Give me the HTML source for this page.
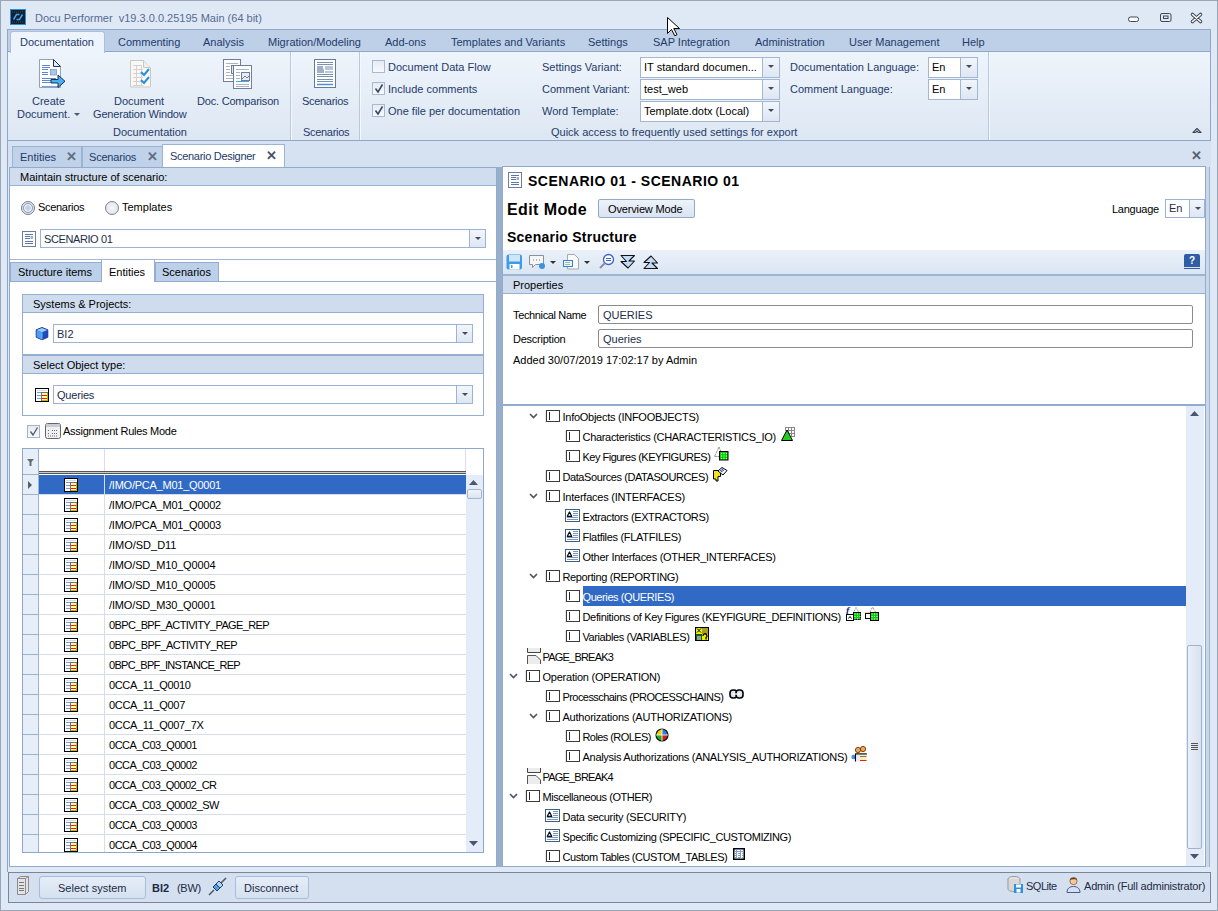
<!DOCTYPE html>
<html><head><meta charset="utf-8">
<style>
*{box-sizing:border-box;margin:0;padding:0}
html,body{width:1218px;height:911px;overflow:hidden;background:#dfe9f5;font-family:"Liberation Sans",sans-serif;font-size:11px;color:#000}
.a{position:absolute}
.t{position:absolute;line-height:14px;white-space:nowrap}
.rb{color:#1f3b6a}
.cb{position:absolute;width:13px;height:13px;border:1px solid #a9b9d0;background:linear-gradient(#e6ebf2,#f7f9fc)}
.combo{position:absolute;background:#fff;border:1px solid #a3b7d3}
.dd{position:absolute;top:0;right:0;bottom:0;width:17px;border-left:1px solid #a3b7d3;background:linear-gradient(#f2f6fb,#dde6f2)}
.dd:after{content:"";position:absolute;left:5px;top:7px;border-left:3px solid transparent;border-right:3px solid transparent;border-top:3px solid #444c5c}
</style></head><body>
<!-- window frame -->
<div class="a" style="left:0;top:0;width:1218px;height:911px;border:1px solid #9aa5b5;background:#dfe9f5"></div>

<!-- title bar -->
<svg class="a" style="left:10px;top:9px" width="16" height="16" viewBox="0 0 16 16"><rect x="0.5" y="0.5" width="15" height="15" fill="#15202c" stroke="#1f8fe8"/><path d="M2 3h12M2 13h12" stroke="#3a4a5a" stroke-dasharray="1 1"/><path d="M3.5 10.5l3-5h3M12.5 5.5l-3 5h-3" fill="none" stroke="#3aa8ff" stroke-width="1.5"/></svg>
<div class="t" style="left:35px;top:11px;color:#566b93">Docu Performer&nbsp; v19.3.0.0.25195 Main (64 bit)</div>

<!-- ribbon -->
<div class="a" style="left:7px;top:29px;width:1204px;height:112px;border:1px solid #8fa8c8;background:#bdd0e8"></div>
<div class="a" style="left:8px;top:51px;width:1202px;height:89px;border-top:1px solid #8fa8c8;background:linear-gradient(#eef4fb,#dde7f3)"></div>
<div class="a" style="left:10px;top:31px;width:95px;height:22px;border:1px solid #aac0dc;border-bottom:none;border-radius:3px 3px 0 0;background:#eef4fb"></div>
<div class="t rb" style="left:20px;top:35px">Documentation</div>
<div class="t rb" style="left:118px;top:35px">Commenting</div>
<div class="t rb" style="left:203px;top:35px">Analysis</div>
<div class="t rb" style="left:268px;top:35px">Migration/Modeling</div>
<div class="t rb" style="left:385px;top:35px">Add-ons</div>
<div class="t rb" style="left:451px;top:35px">Templates and Variants</div>
<div class="t rb" style="left:588px;top:35px">Settings</div>
<div class="t rb" style="left:653px;top:35px">SAP Integration</div>
<div class="t rb" style="left:755px;top:35px">Administration</div>
<div class="t rb" style="left:849px;top:35px">User Management</div>
<div class="t rb" style="left:962px;top:35px">Help</div>


<!-- ribbon body content -->
<div class="a" style="left:290px;top:52px;width:1px;height:88px;background:#b9c9dd;box-shadow:1px 0 0 #f5f9fd"></div>
<div class="a" style="left:359px;top:52px;width:1px;height:88px;background:#b9c9dd;box-shadow:1px 0 0 #f5f9fd"></div>
<div class="a" style="left:988px;top:52px;width:1px;height:88px;background:#b9c9dd;box-shadow:1px 0 0 #f5f9fd"></div>
<!-- create document icon -->
<svg class="a" style="left:37px;top:57px" width="32" height="34" viewBox="0 0 32 34">
<path d="M2.5 2.5h14l7 7v21h-21z" fill="#fff" stroke="#8ea3bf"/>
<path d="M16.5 2.5v7h7z" fill="#e4eaf2" stroke="#22355e" stroke-linejoin="round"/>
<path d="M5 8.5h8M5 10.5h8M5 12.5h6M5 15.5h6M5 17.5h6M5 21.5h14M5 23.5h9M5 25.5h9" stroke="#5c88cc"/>
<path d="M5 29.5h16" stroke="#7aa0d8"/>
<rect x="13.5" y="12.5" width="6" height="5.5" fill="#a9c6ea" stroke="#7d9cc8" stroke-width="0.8"/>
<path d="M14 22.5h7v-4.5l7 6.3-7 6.2v-4.5h-7z" fill="#45b0f2" stroke="#1f2f4f" stroke-linejoin="round"/>
</svg>
<div class="t rb" style="left:32px;top:94px">Create</div>
<div class="t rb" style="left:17px;top:107px">Document.</div>
<div class="a" style="left:74px;top:113px;border-left:3px solid transparent;border-right:3px solid transparent;border-top:3px solid #4a5870"></div>
<!-- doc gen icon -->
<svg class="a" style="left:128px;top:58px" width="26" height="32" viewBox="0 0 26 32">
<path d="M2.5 2.5h13l7 7v19.5h-20z" fill="#f8f8f6" stroke="#c9c9c4"/>
<path d="M15.5 2.5v7h7" fill="#eee" stroke="#c9c9c4"/>
<g stroke="#d9cfcf" stroke-width="1" fill="none"><path d="M5 7.5h9M5 11.5h10M5 15.5h10M5 19.5h10M5 23.5h10M5 27.5h10M8.5 7v21M13.5 7v21"/></g>
<path d="M13 14l3 3 5-6" fill="none" stroke="#2a8ee0" stroke-width="2"/>
<path d="M13 22l3 3 5-6" fill="none" stroke="#2a8ee0" stroke-width="2"/>
</svg>
<div class="t rb" style="left:114px;top:94px">Document</div>
<div class="t rb" style="left:93px;top:107px;letter-spacing:-0.18px">Generation Window</div>
<!-- doc comparison icon -->
<svg class="a" style="left:222px;top:58px" width="32" height="32" viewBox="0 0 32 32">
<rect x="1.5" y="1.5" width="17" height="22" fill="#fff" stroke="#6e7f99"/>
<g stroke="#a8b4c4"><path d="M4 5.5h12M4 8.5h4M4 11.5h4M4 14.5h4M4 17.5h12M4 20.5h12"/></g>
<rect x="9.5" y="7.5" width="7" height="8" fill="#dfe5ee" stroke="#6e7f99"/>
<rect x="11.5" y="7.5" width="18" height="23" fill="#fff" stroke="#6e7f99"/>
<g stroke="#a8b4c4"><path d="M14 11.5h13M14 14.5h4M14 17.5h4M14 20.5h4M14 26.5h13M14 28.5h13"/></g>
<path d="M14 23.5h13" stroke="#4aa0e8"/>
<rect x="19.5" y="14.5" width="8" height="8" fill="#e9edf3" stroke="#6e7f99"/>
<path d="M20 21l3-3 2 2 2-2" fill="none" stroke="#6e7f99"/>
</svg>
<div class="t rb" style="left:197px;top:94px;letter-spacing:-0.2px">Doc. Comparison</div>
<div class="t rb" style="left:113px;top:125px">Documentation</div>
<!-- scenarios icon -->
<svg class="a" style="left:313px;top:58px" width="25" height="32" viewBox="0 0 25 32">
<rect x="1.5" y="1.5" width="21" height="28" fill="#fff" stroke="#65799a"/>
<g stroke="#7c90b0"><path d="M4 4.5h16M4 6.5h16M4 16.5h16M4 18.5h16M4 21.5h16M4 23.5h16"/></g>
<rect x="4" y="8" width="6" height="3" fill="#9fb2cc"/><rect x="12" y="8" width="8" height="4" fill="#b7c6da"/>
<rect x="4" y="11" width="7" height="4" fill="#9fb2cc"/><rect x="12" y="13" width="8" height="2" fill="#b7c6da"/>
<path d="M4 26.5h16" stroke="#4a8ee0" stroke-width="1.5"/>
</svg>
<div class="t rb" style="left:302px;top:94px;letter-spacing:-0.3px">Scenarios</div>
<div class="t rb" style="left:303px;top:125px;letter-spacing:-0.3px">Scenarios</div>
<!-- checkboxes -->
<div class="cb" style="left:372px;top:60px"></div>
<div class="t rb" style="left:388px;top:60px">Document Data Flow</div>
<div class="cb" style="left:372px;top:82px"></div>
<svg class="a" style="left:374px;top:84px" width="10" height="10"><path d="M1.5 4.5l2.5 3.5 4.5-7.5" fill="none" stroke="#364a70" stroke-width="1.6"/></svg>
<div class="t rb" style="left:388px;top:82px">Include comments</div>
<div class="cb" style="left:372px;top:104px"></div>
<svg class="a" style="left:374px;top:106px" width="10" height="10"><path d="M1.5 4.5l2.5 3.5 4.5-7.5" fill="none" stroke="#364a70" stroke-width="1.6"/></svg>
<div class="t rb" style="left:388px;top:104px">One file per documentation</div>
<!-- settings -->
<div class="t rb" style="left:542px;top:60px">Settings Variant:</div>
<div class="t rb" style="left:542px;top:82px">Comment Variant:</div>
<div class="t rb" style="left:542px;top:104px">Word Template:</div>
<div class="combo" style="left:640px;top:57px;width:140px;height:21px"><div class="t" style="left:3px;top:2px">IT standard documen...</div><div class="dd"></div></div>
<div class="combo" style="left:640px;top:79px;width:140px;height:21px"><div class="t" style="left:3px;top:2px">test_web</div><div class="dd"></div></div>
<div class="combo" style="left:640px;top:101px;width:140px;height:21px"><div class="t" style="left:3px;top:2px">Template.dotx (Local)</div><div class="dd"></div></div>
<div class="t rb" style="left:790px;top:60px">Documentation Language:</div>
<div class="t rb" style="left:790px;top:82px">Comment Language:</div>
<div class="combo" style="left:928px;top:57px;width:50px;height:21px"><div class="t" style="left:3px;top:2px">En</div><div class="dd"></div></div>
<div class="combo" style="left:928px;top:79px;width:50px;height:21px"><div class="t" style="left:3px;top:2px">En</div><div class="dd"></div></div>
<div class="t rb" style="left:551px;top:125px">Quick access to frequently used settings for export</div>
<svg class="a" style="left:1192px;top:126px" width="10" height="8"><path d="M1 6.5l4-4 4 4h-2.5l-1.5-1.5-1.5 1.5z" fill="#fff" stroke="#3a4458" stroke-width="1.1" stroke-linejoin="round"/></svg>
<!-- window buttons -->
<svg class="a" style="left:1126px;top:10px" width="80" height="16"><rect x="2.5" y="7" width="10" height="4.5" rx="2" fill="#fff" stroke="#3e4658"/><rect x="34.5" y="3.5" width="10.5" height="8" rx="1.5" fill="none" stroke="#3e4658"/><rect x="37.5" y="6" width="4.5" height="2.5" fill="none" stroke="#3e4658"/><path d="M66.5 4.5l8 7M74.5 4.5l-8 7" stroke="#3e4658" stroke-width="3.6" stroke-linecap="round"/><path d="M66.5 4.5l8 7M74.5 4.5l-8 7" stroke="#fff" stroke-width="1.6" stroke-linecap="round"/></svg>

<!-- doc tab strip -->

<div class="a" style="left:8px;top:141px;width:1203px;height:26px;background:#d6e2f1"></div>
<div class="a" style="left:12px;top:146px;width:70px;height:21px;background:#bfd2ea;border:1px solid #9ab4d6;border-bottom:none"></div>
<div class="t" style="left:20px;top:150px;color:#1e3a66">Entities</div>
<div class="t" style="left:66px;top:150px;color:#636c80;font-size:13px;font-weight:bold">&#x2715;</div>
<div class="a" style="left:82px;top:146px;width:81px;height:21px;background:#bfd2ea;border:1px solid #9ab4d6;border-bottom:none"></div>
<div class="t" style="left:89px;top:150px;color:#1e3a66;letter-spacing:-0.2px">Scenarios</div>
<div class="t" style="left:147px;top:150px;color:#636c80;font-size:13px;font-weight:bold">&#x2715;</div>
<div class="a" style="left:162px;top:144px;width:123px;height:24px;background:#fff;border:1px solid #9ab4d6;border-bottom:none"></div>
<div class="t" style="left:170px;top:149px;color:#1e3a66;letter-spacing:-0.3px">Scenario Designer</div>
<div class="t" style="left:266px;top:149px;color:#4a5368;font-size:13px;font-weight:bold">&#x2715;</div>
<div class="t" style="left:1191px;top:149px;color:#566075;font-size:13px;font-weight:bold">&#x2715;</div>


<!-- left panel -->

<div class="a" style="left:7px;top:141px;width:1px;height:731px;background:#8ea6c6"></div>
<div class="a" style="left:9px;top:167px;width:488px;height:700px;background:#fff;border:1px solid #93abcb"></div>
<div class="a" style="left:10px;top:168px;width:486px;height:18px;background:#cfddee;border-bottom:1px solid #9ab2d2"></div>
<div class="t" style="left:20px;top:170px">Maintain structure of scenario:</div>
<!-- radios -->
<div class="a" style="left:21px;top:201px;width:14px;height:14px;border-radius:50%;border:1px solid #6f7c92;background:radial-gradient(circle,#c3d2e6 0 2.6px,#f3f6fa 3px,#dfe6ef 5px)"></div>
<div class="a" style="left:23px;top:203px;width:10px;height:10px;border-radius:50%;border:1px solid #8f9bb0"></div>
<div class="t" style="left:38px;top:200px;letter-spacing:-0.3px">Scenarios</div>
<div class="a" style="left:105px;top:201px;width:14px;height:14px;border-radius:50%;border:1px solid #7a8496;background:radial-gradient(circle,#f6f7f9,#dcdfe5)"></div>
<div class="t" style="left:122px;top:200px">Templates</div>
<!-- combo scenario -->
<svg class="a" style="left:22px;top:231px" width="14" height="16" viewBox="0 0 14 16"><rect x="0.5" y="0.5" width="13" height="15" fill="#fff" stroke="#6d7e9a"/><path d="M3 3.5h8M3 5.5h5M3 7.5h5M3 10.5h8M3 12.5h8" stroke="#5b79a8"/><rect x="8.5" y="5" width="2.5" height="3" fill="#9fb0c8"/></svg>
<div class="combo" style="left:40px;top:229px;width:446px;height:19px;border-color:#9cb3d3"><div class="t" style="left:3px;top:2px;color:#1c2d4a;letter-spacing:-0.4px">SCENARIO 01</div><div class="dd" style="width:16px;border-color:#9cb3d3"></div></div>
<!-- inner tabs -->
<div class="a" style="left:10px;top:259px;width:486px;height:1px;background:#a2b8d6"></div>
<div class="a" style="left:10px;top:262px;width:92px;height:20px;background:#bcd0ea;border:1px solid #93acd0;border-bottom:none"></div>
<div class="t" style="left:18px;top:265px">Structure items</div>
<div class="a" style="left:155px;top:262px;width:64px;height:20px;background:#bcd0ea;border:1px solid #93acd0;border-bottom:none"></div>
<div class="t" style="left:162px;top:265px">Scenarios</div>
<div class="a" style="left:10px;top:281px;width:486px;height:1px;background:#93acd0"></div>
<div class="a" style="left:101px;top:259px;width:54px;height:23px;background:#fff;border:1px solid #93acd0;border-bottom:none;border-top-color:#a2b8d6"></div>
<div class="t" style="left:109px;top:265px">Entities</div>
<!-- group boxes -->
<div class="a" style="left:22px;top:294px;width:462px;height:62px;border:1px solid #96aed0"></div>
<div class="a" style="left:23px;top:295px;width:460px;height:18px;background:#cfdcee;border-bottom:1px solid #96aed0"></div>
<div class="t" style="left:33px;top:297px">Systems &amp; Projects:</div>
<svg class="a" style="left:35px;top:326px" width="14" height="15" viewBox="0 0 14 15"><path d="M7 1.5l5.8 2.3v7.4L7 13.8 1.2 11.2V3.8z" fill="#2456c8" stroke="#1a1f88" stroke-width="0.9" stroke-linejoin="round"/><path d="M1.6 4l5.4 2.4 5.4-2.4L7 1.9z" fill="#8cd0ff"/><path d="M1.6 4.3l5.2 2.3v6.8l-5.2-2.4z" fill="#4aa0f0"/><path d="M7.2 6.6l5.2-2.3v6.7l-5.2 2.4z" fill="#1e4cc0"/><path d="M7 6.5v7" stroke="#b8dcff" stroke-width="0.6"/></svg>
<div class="combo" style="left:53px;top:324px;width:420px;height:19px;border-color:#9cb3d3"><div class="t" style="left:3px;top:2px;color:#1c2d4a">BI2</div><div class="dd" style="width:16px;border-color:#9cb3d3"></div></div>
<div class="a" style="left:22px;top:354px;width:462px;height:62px;border:1px solid #96aed0;border-top-width:2px"></div>
<div class="a" style="left:23px;top:356px;width:460px;height:18px;background:#cfdcee;border-bottom:1px solid #96aed0"></div>
<div class="t" style="left:33px;top:358px">Select Object type:</div>
<svg class="a" style="left:35px;top:388px" width="14" height="14" viewBox="0 0 14 14"><rect x="0.5" y="0.5" width="13" height="13" fill="#fff" stroke="#000"/><path d="M2 2.5h10" stroke="#cfe0f6"/><path d="M2 4.5h4M2 7.5h4M2 10.5h4" stroke="#6f9be0"/><rect x="7" y="5" width="6" height="8" fill="#ffff9c"/><path d="M7 7.5h6M7 10.5h6" stroke="#ff1010"/><path d="M6 4.5h7M6.5 4v9" stroke="#707070"/><path d="M12.5 5v8M7 12.5h6" stroke="#b8b800"/></svg>
<div class="combo" style="left:53px;top:385px;width:420px;height:19px;border-color:#9cb3d3"><div class="t" style="left:3px;top:2px;color:#1c2d4a;letter-spacing:-0.2px">Queries</div><div class="dd" style="width:16px;border-color:#9cb3d3"></div></div>
<!-- assignment rules -->
<div class="cb" style="left:27px;top:425px;border-color:#a3b4cc"></div>
<svg class="a" style="left:29px;top:427px" width="10" height="10"><path d="M1.5 4.5l2.5 3.5 4.5-7.5" fill="none" stroke="#555f70" stroke-width="1.4"/></svg>
<svg class="a" style="left:45px;top:423px" width="16" height="16" viewBox="0 0 16 16"><rect x="0.5" y="0.5" width="15" height="15" rx="2" fill="#eef0f2" stroke="#5e6470"/><rect x="1" y="1" width="14" height="3" fill="#c9ccd2"/><path d="M3 7.5h2M3 10.5h2M3 13h10M7 7.5h6M7 10.5h6" stroke="#6a707c" stroke-dasharray="1 1"/></svg>
<div class="t" style="left:63px;top:424px;letter-spacing:-0.27px">Assignment Rules Mode</div>
<!-- grid -->
<div class="a" style="left:22px;top:448px;width:462px;height:405px;border:1px solid #8fa7c8;background:#fff"></div>
<div class="a" style="left:23px;top:449px;width:16px;height:403px;background:#e6eef8;border-right:1px solid #9cb2d0"></div><div class="a" style="left:23px;top:474px;width:16px;height:1px;background:#9cb2d0"></div>
<svg class="a" style="left:27px;top:458px" width="8" height="8"><path d="M0 1h7l-2.5 3v4h-2v-4z" fill="#666d7a"/></svg>
<div class="a" style="left:104px;top:449px;width:1px;height:22px;background:#d8dfe8"></div>
<div class="a" style="left:465px;top:449px;width:1px;height:26px;background:#d8dfe8"></div>
<div class="a" style="left:39px;top:471px;width:427px;height:3px;border-top:1px solid #555;border-bottom:1px solid #555;background:#ccc"></div>
<div class="a" style="left:466px;top:475px;width:17px;height:377px;background:#e3ecf8"></div>
<svg class="a" style="left:468px;top:479px" width="12" height="8"><path d="M1 6h9l-4.5-5z" fill="#4b5570"/></svg>
<div class="a" style="left:467px;top:489px;width:15px;height:10px;border:1px solid #a4b6cf;border-radius:2px;background:linear-gradient(#f0f4f9,#dbe4ef)"></div>
<svg class="a" style="left:468px;top:840px" width="12" height="8"><path d="M1 1h9l-4.5 5z" fill="#4b5570"/></svg>

<div class="a" style="left:39px;top:475px;width:427px;height:19px;background:#316ac5"></div>
<svg class="a" style="left:28px;top:481px" width="5" height="8"><path d="M0 0l4 4-4 4z" fill="#555d6e"/></svg>
<div class="a" style="left:39px;top:494px;width:427px;height:1px;background:#d5deea"></div><div class="a" style="left:23px;top:494px;width:16px;height:1px;background:#9cb2d0"></div>
<div class="a" style="left:104px;top:475px;width:1px;height:20px;background:#d5deea"></div>
<svg class="a" style="left:64px;top:478px" width="14" height="14" viewBox="0 0 14 14"><rect x="0.5" y="0.5" width="13" height="13" fill="#fff" stroke="#000"/><path d="M2 2.5h10" stroke="#cfe0f6"/><path d="M2 4.5h4M2 7.5h4M2 10.5h4" stroke="#6f9be0"/><rect x="7" y="5" width="6" height="8" fill="#ffff9c"/><path d="M7 7.5h6M7 10.5h6" stroke="#ff1010"/><path d="M6 4.5h7M6.5 4v9" stroke="#707070"/><path d="M12.5 5v8M7 12.5h6" stroke="#b8b800"/></svg>
<div class="t" style="left:109px;top:478px;color:#fff;letter-spacing:-0.236px">/IMO/PCA_M01_Q0001</div>
<div class="a" style="left:39px;top:514px;width:427px;height:1px;background:#d5deea"></div><div class="a" style="left:23px;top:514px;width:16px;height:1px;background:#9cb2d0"></div>
<div class="a" style="left:104px;top:495px;width:1px;height:20px;background:#d5deea"></div>
<svg class="a" style="left:64px;top:498px" width="14" height="14" viewBox="0 0 14 14"><rect x="0.5" y="0.5" width="13" height="13" fill="#fff" stroke="#000"/><path d="M2 2.5h10" stroke="#cfe0f6"/><path d="M2 4.5h4M2 7.5h4M2 10.5h4" stroke="#6f9be0"/><rect x="7" y="5" width="6" height="8" fill="#ffff9c"/><path d="M7 7.5h6M7 10.5h6" stroke="#ff1010"/><path d="M6 4.5h7M6.5 4v9" stroke="#707070"/><path d="M12.5 5v8M7 12.5h6" stroke="#b8b800"/></svg>
<div class="t" style="left:109px;top:498px;color:#000;letter-spacing:-0.236px">/IMO/PCA_M01_Q0002</div>
<div class="a" style="left:39px;top:534px;width:427px;height:1px;background:#d5deea"></div><div class="a" style="left:23px;top:534px;width:16px;height:1px;background:#9cb2d0"></div>
<div class="a" style="left:104px;top:515px;width:1px;height:20px;background:#d5deea"></div>
<svg class="a" style="left:64px;top:518px" width="14" height="14" viewBox="0 0 14 14"><rect x="0.5" y="0.5" width="13" height="13" fill="#fff" stroke="#000"/><path d="M2 2.5h10" stroke="#cfe0f6"/><path d="M2 4.5h4M2 7.5h4M2 10.5h4" stroke="#6f9be0"/><rect x="7" y="5" width="6" height="8" fill="#ffff9c"/><path d="M7 7.5h6M7 10.5h6" stroke="#ff1010"/><path d="M6 4.5h7M6.5 4v9" stroke="#707070"/><path d="M12.5 5v8M7 12.5h6" stroke="#b8b800"/></svg>
<div class="t" style="left:109px;top:518px;color:#000;letter-spacing:-0.236px">/IMO/PCA_M01_Q0003</div>
<div class="a" style="left:39px;top:554px;width:427px;height:1px;background:#d5deea"></div><div class="a" style="left:23px;top:554px;width:16px;height:1px;background:#9cb2d0"></div>
<div class="a" style="left:104px;top:535px;width:1px;height:20px;background:#d5deea"></div>
<svg class="a" style="left:64px;top:538px" width="14" height="14" viewBox="0 0 14 14"><rect x="0.5" y="0.5" width="13" height="13" fill="#fff" stroke="#000"/><path d="M2 2.5h10" stroke="#cfe0f6"/><path d="M2 4.5h4M2 7.5h4M2 10.5h4" stroke="#6f9be0"/><rect x="7" y="5" width="6" height="8" fill="#ffff9c"/><path d="M7 7.5h6M7 10.5h6" stroke="#ff1010"/><path d="M6 4.5h7M6.5 4v9" stroke="#707070"/><path d="M12.5 5v8M7 12.5h6" stroke="#b8b800"/></svg>
<div class="t" style="left:109px;top:538px;color:#000;letter-spacing:-0.017px">/IMO/SD_D11</div>
<div class="a" style="left:39px;top:574px;width:427px;height:1px;background:#d5deea"></div><div class="a" style="left:23px;top:574px;width:16px;height:1px;background:#9cb2d0"></div>
<div class="a" style="left:104px;top:555px;width:1px;height:20px;background:#d5deea"></div>
<svg class="a" style="left:64px;top:558px" width="14" height="14" viewBox="0 0 14 14"><rect x="0.5" y="0.5" width="13" height="13" fill="#fff" stroke="#000"/><path d="M2 2.5h10" stroke="#cfe0f6"/><path d="M2 4.5h4M2 7.5h4M2 10.5h4" stroke="#6f9be0"/><rect x="7" y="5" width="6" height="8" fill="#ffff9c"/><path d="M7 7.5h6M7 10.5h6" stroke="#ff1010"/><path d="M6 4.5h7M6.5 4v9" stroke="#707070"/><path d="M12.5 5v8M7 12.5h6" stroke="#b8b800"/></svg>
<div class="t" style="left:109px;top:558px;color:#000;letter-spacing:-0.142px">/IMO/SD_M10_Q0004</div>
<div class="a" style="left:39px;top:594px;width:427px;height:1px;background:#d5deea"></div><div class="a" style="left:23px;top:594px;width:16px;height:1px;background:#9cb2d0"></div>
<div class="a" style="left:104px;top:575px;width:1px;height:20px;background:#d5deea"></div>
<svg class="a" style="left:64px;top:578px" width="14" height="14" viewBox="0 0 14 14"><rect x="0.5" y="0.5" width="13" height="13" fill="#fff" stroke="#000"/><path d="M2 2.5h10" stroke="#cfe0f6"/><path d="M2 4.5h4M2 7.5h4M2 10.5h4" stroke="#6f9be0"/><rect x="7" y="5" width="6" height="8" fill="#ffff9c"/><path d="M7 7.5h6M7 10.5h6" stroke="#ff1010"/><path d="M6 4.5h7M6.5 4v9" stroke="#707070"/><path d="M12.5 5v8M7 12.5h6" stroke="#b8b800"/></svg>
<div class="t" style="left:109px;top:578px;color:#000;letter-spacing:-0.142px">/IMO/SD_M10_Q0005</div>
<div class="a" style="left:39px;top:614px;width:427px;height:1px;background:#d5deea"></div><div class="a" style="left:23px;top:614px;width:16px;height:1px;background:#9cb2d0"></div>
<div class="a" style="left:104px;top:595px;width:1px;height:20px;background:#d5deea"></div>
<svg class="a" style="left:64px;top:598px" width="14" height="14" viewBox="0 0 14 14"><rect x="0.5" y="0.5" width="13" height="13" fill="#fff" stroke="#000"/><path d="M2 2.5h10" stroke="#cfe0f6"/><path d="M2 4.5h4M2 7.5h4M2 10.5h4" stroke="#6f9be0"/><rect x="7" y="5" width="6" height="8" fill="#ffff9c"/><path d="M7 7.5h6M7 10.5h6" stroke="#ff1010"/><path d="M6 4.5h7M6.5 4v9" stroke="#707070"/><path d="M12.5 5v8M7 12.5h6" stroke="#b8b800"/></svg>
<div class="t" style="left:109px;top:598px;color:#000;letter-spacing:-0.142px">/IMO/SD_M30_Q0001</div>
<div class="a" style="left:39px;top:634px;width:427px;height:1px;background:#d5deea"></div><div class="a" style="left:23px;top:634px;width:16px;height:1px;background:#9cb2d0"></div>
<div class="a" style="left:104px;top:615px;width:1px;height:20px;background:#d5deea"></div>
<svg class="a" style="left:64px;top:618px" width="14" height="14" viewBox="0 0 14 14"><rect x="0.5" y="0.5" width="13" height="13" fill="#fff" stroke="#000"/><path d="M2 2.5h10" stroke="#cfe0f6"/><path d="M2 4.5h4M2 7.5h4M2 10.5h4" stroke="#6f9be0"/><rect x="7" y="5" width="6" height="8" fill="#ffff9c"/><path d="M7 7.5h6M7 10.5h6" stroke="#ff1010"/><path d="M6 4.5h7M6.5 4v9" stroke="#707070"/><path d="M12.5 5v8M7 12.5h6" stroke="#b8b800"/></svg>
<div class="t" style="left:109px;top:618px;color:#000;letter-spacing:-0.638px">0BPC_BPF_ACTIVITY_PAGE_REP</div>
<div class="a" style="left:39px;top:654px;width:427px;height:1px;background:#d5deea"></div><div class="a" style="left:23px;top:654px;width:16px;height:1px;background:#9cb2d0"></div>
<div class="a" style="left:104px;top:635px;width:1px;height:20px;background:#d5deea"></div>
<svg class="a" style="left:64px;top:638px" width="14" height="14" viewBox="0 0 14 14"><rect x="0.5" y="0.5" width="13" height="13" fill="#fff" stroke="#000"/><path d="M2 2.5h10" stroke="#cfe0f6"/><path d="M2 4.5h4M2 7.5h4M2 10.5h4" stroke="#6f9be0"/><rect x="7" y="5" width="6" height="8" fill="#ffff9c"/><path d="M7 7.5h6M7 10.5h6" stroke="#ff1010"/><path d="M6 4.5h7M6.5 4v9" stroke="#707070"/><path d="M12.5 5v8M7 12.5h6" stroke="#b8b800"/></svg>
<div class="t" style="left:109px;top:638px;color:#000;letter-spacing:-0.604px">0BPC_BPF_ACTIVITY_REP</div>
<div class="a" style="left:39px;top:674px;width:427px;height:1px;background:#d5deea"></div><div class="a" style="left:23px;top:674px;width:16px;height:1px;background:#9cb2d0"></div>
<div class="a" style="left:104px;top:655px;width:1px;height:20px;background:#d5deea"></div>
<svg class="a" style="left:64px;top:658px" width="14" height="14" viewBox="0 0 14 14"><rect x="0.5" y="0.5" width="13" height="13" fill="#fff" stroke="#000"/><path d="M2 2.5h10" stroke="#cfe0f6"/><path d="M2 4.5h4M2 7.5h4M2 10.5h4" stroke="#6f9be0"/><rect x="7" y="5" width="6" height="8" fill="#ffff9c"/><path d="M7 7.5h6M7 10.5h6" stroke="#ff1010"/><path d="M6 4.5h7M6.5 4v9" stroke="#707070"/><path d="M12.5 5v8M7 12.5h6" stroke="#b8b800"/></svg>
<div class="t" style="left:109px;top:658px;color:#000;letter-spacing:-0.713px">0BPC_BPF_INSTANCE_REP</div>
<div class="a" style="left:39px;top:694px;width:427px;height:1px;background:#d5deea"></div><div class="a" style="left:23px;top:694px;width:16px;height:1px;background:#9cb2d0"></div>
<div class="a" style="left:104px;top:675px;width:1px;height:20px;background:#d5deea"></div>
<svg class="a" style="left:64px;top:678px" width="14" height="14" viewBox="0 0 14 14"><rect x="0.5" y="0.5" width="13" height="13" fill="#fff" stroke="#000"/><path d="M2 2.5h10" stroke="#cfe0f6"/><path d="M2 4.5h4M2 7.5h4M2 10.5h4" stroke="#6f9be0"/><rect x="7" y="5" width="6" height="8" fill="#ffff9c"/><path d="M7 7.5h6M7 10.5h6" stroke="#ff1010"/><path d="M6 4.5h7M6.5 4v9" stroke="#707070"/><path d="M12.5 5v8M7 12.5h6" stroke="#b8b800"/></svg>
<div class="t" style="left:109px;top:678px;color:#000;letter-spacing:-0.353px">0CCA_11_Q0010</div>
<div class="a" style="left:39px;top:714px;width:427px;height:1px;background:#d5deea"></div><div class="a" style="left:23px;top:714px;width:16px;height:1px;background:#9cb2d0"></div>
<div class="a" style="left:104px;top:695px;width:1px;height:20px;background:#d5deea"></div>
<svg class="a" style="left:64px;top:698px" width="14" height="14" viewBox="0 0 14 14"><rect x="0.5" y="0.5" width="13" height="13" fill="#fff" stroke="#000"/><path d="M2 2.5h10" stroke="#cfe0f6"/><path d="M2 4.5h4M2 7.5h4M2 10.5h4" stroke="#6f9be0"/><rect x="7" y="5" width="6" height="8" fill="#ffff9c"/><path d="M7 7.5h6M7 10.5h6" stroke="#ff1010"/><path d="M6 4.5h7M6.5 4v9" stroke="#707070"/><path d="M12.5 5v8M7 12.5h6" stroke="#b8b800"/></svg>
<div class="t" style="left:109px;top:698px;color:#000;letter-spacing:-0.331px">0CCA_11_Q007</div>
<div class="a" style="left:39px;top:734px;width:427px;height:1px;background:#d5deea"></div><div class="a" style="left:23px;top:734px;width:16px;height:1px;background:#9cb2d0"></div>
<div class="a" style="left:104px;top:715px;width:1px;height:20px;background:#d5deea"></div>
<svg class="a" style="left:64px;top:718px" width="14" height="14" viewBox="0 0 14 14"><rect x="0.5" y="0.5" width="13" height="13" fill="#fff" stroke="#000"/><path d="M2 2.5h10" stroke="#cfe0f6"/><path d="M2 4.5h4M2 7.5h4M2 10.5h4" stroke="#6f9be0"/><rect x="7" y="5" width="6" height="8" fill="#ffff9c"/><path d="M7 7.5h6M7 10.5h6" stroke="#ff1010"/><path d="M6 4.5h7M6.5 4v9" stroke="#707070"/><path d="M12.5 5v8M7 12.5h6" stroke="#b8b800"/></svg>
<div class="t" style="left:109px;top:718px;color:#000;letter-spacing:-0.338px">0CCA_11_Q007_7X</div>
<div class="a" style="left:39px;top:754px;width:427px;height:1px;background:#d5deea"></div><div class="a" style="left:23px;top:754px;width:16px;height:1px;background:#9cb2d0"></div>
<div class="a" style="left:104px;top:735px;width:1px;height:20px;background:#d5deea"></div>
<svg class="a" style="left:64px;top:738px" width="14" height="14" viewBox="0 0 14 14"><rect x="0.5" y="0.5" width="13" height="13" fill="#fff" stroke="#000"/><path d="M2 2.5h10" stroke="#cfe0f6"/><path d="M2 4.5h4M2 7.5h4M2 10.5h4" stroke="#6f9be0"/><rect x="7" y="5" width="6" height="8" fill="#ffff9c"/><path d="M7 7.5h6M7 10.5h6" stroke="#ff1010"/><path d="M6 4.5h7M6.5 4v9" stroke="#707070"/><path d="M12.5 5v8M7 12.5h6" stroke="#b8b800"/></svg>
<div class="t" style="left:109px;top:738px;color:#000;letter-spacing:-0.489px">0CCA_C03_Q0001</div>
<div class="a" style="left:39px;top:774px;width:427px;height:1px;background:#d5deea"></div><div class="a" style="left:23px;top:774px;width:16px;height:1px;background:#9cb2d0"></div>
<div class="a" style="left:104px;top:755px;width:1px;height:20px;background:#d5deea"></div>
<svg class="a" style="left:64px;top:758px" width="14" height="14" viewBox="0 0 14 14"><rect x="0.5" y="0.5" width="13" height="13" fill="#fff" stroke="#000"/><path d="M2 2.5h10" stroke="#cfe0f6"/><path d="M2 4.5h4M2 7.5h4M2 10.5h4" stroke="#6f9be0"/><rect x="7" y="5" width="6" height="8" fill="#ffff9c"/><path d="M7 7.5h6M7 10.5h6" stroke="#ff1010"/><path d="M6 4.5h7M6.5 4v9" stroke="#707070"/><path d="M12.5 5v8M7 12.5h6" stroke="#b8b800"/></svg>
<div class="t" style="left:109px;top:758px;color:#000;letter-spacing:-0.489px">0CCA_C03_Q0002</div>
<div class="a" style="left:39px;top:794px;width:427px;height:1px;background:#d5deea"></div><div class="a" style="left:23px;top:794px;width:16px;height:1px;background:#9cb2d0"></div>
<div class="a" style="left:104px;top:775px;width:1px;height:20px;background:#d5deea"></div>
<svg class="a" style="left:64px;top:778px" width="14" height="14" viewBox="0 0 14 14"><rect x="0.5" y="0.5" width="13" height="13" fill="#fff" stroke="#000"/><path d="M2 2.5h10" stroke="#cfe0f6"/><path d="M2 4.5h4M2 7.5h4M2 10.5h4" stroke="#6f9be0"/><rect x="7" y="5" width="6" height="8" fill="#ffff9c"/><path d="M7 7.5h6M7 10.5h6" stroke="#ff1010"/><path d="M6 4.5h7M6.5 4v9" stroke="#707070"/><path d="M12.5 5v8M7 12.5h6" stroke="#b8b800"/></svg>
<div class="t" style="left:109px;top:778px;color:#000;letter-spacing:-0.550px">0CCA_C03_Q0002_CR</div>
<div class="a" style="left:39px;top:814px;width:427px;height:1px;background:#d5deea"></div><div class="a" style="left:23px;top:814px;width:16px;height:1px;background:#9cb2d0"></div>
<div class="a" style="left:104px;top:795px;width:1px;height:20px;background:#d5deea"></div>
<svg class="a" style="left:64px;top:798px" width="14" height="14" viewBox="0 0 14 14"><rect x="0.5" y="0.5" width="13" height="13" fill="#fff" stroke="#000"/><path d="M2 2.5h10" stroke="#cfe0f6"/><path d="M2 4.5h4M2 7.5h4M2 10.5h4" stroke="#6f9be0"/><rect x="7" y="5" width="6" height="8" fill="#ffff9c"/><path d="M7 7.5h6M7 10.5h6" stroke="#ff1010"/><path d="M6 4.5h7M6.5 4v9" stroke="#707070"/><path d="M12.5 5v8M7 12.5h6" stroke="#b8b800"/></svg>
<div class="t" style="left:109px;top:798px;color:#000;letter-spacing:-0.511px">0CCA_C03_Q0002_SW</div>
<div class="a" style="left:39px;top:834px;width:427px;height:1px;background:#d5deea"></div><div class="a" style="left:23px;top:834px;width:16px;height:1px;background:#9cb2d0"></div>
<div class="a" style="left:104px;top:815px;width:1px;height:20px;background:#d5deea"></div>
<svg class="a" style="left:64px;top:818px" width="14" height="14" viewBox="0 0 14 14"><rect x="0.5" y="0.5" width="13" height="13" fill="#fff" stroke="#000"/><path d="M2 2.5h10" stroke="#cfe0f6"/><path d="M2 4.5h4M2 7.5h4M2 10.5h4" stroke="#6f9be0"/><rect x="7" y="5" width="6" height="8" fill="#ffff9c"/><path d="M7 7.5h6M7 10.5h6" stroke="#ff1010"/><path d="M6 4.5h7M6.5 4v9" stroke="#707070"/><path d="M12.5 5v8M7 12.5h6" stroke="#b8b800"/></svg>
<div class="t" style="left:109px;top:818px;color:#000;letter-spacing:-0.489px">0CCA_C03_Q0003</div>
<div class="a" style="left:104px;top:835px;width:1px;height:17px;background:#d5deea"></div>
<svg class="a" style="left:64px;top:838px" width="14" height="14" viewBox="0 0 14 14"><rect x="0.5" y="0.5" width="13" height="13" fill="#fff" stroke="#000"/><path d="M2 2.5h10" stroke="#cfe0f6"/><path d="M2 4.5h4M2 7.5h4M2 10.5h4" stroke="#6f9be0"/><rect x="7" y="5" width="6" height="8" fill="#ffff9c"/><path d="M7 7.5h6M7 10.5h6" stroke="#ff1010"/><path d="M6 4.5h7M6.5 4v9" stroke="#707070"/><path d="M12.5 5v8M7 12.5h6" stroke="#b8b800"/></svg>
<div class="t" style="left:109px;top:838px;color:#000;letter-spacing:-0.489px">0CCA_C03_Q0004</div>
<!-- right panel -->

<div class="a" style="left:497px;top:167px;width:5px;height:700px;background:#97aecd"></div>
<div class="a" style="left:502px;top:166px;width:704px;height:701px;background:#fff;border:1px solid #93abcb"></div>
<div class="a" style="left:1206px;top:167px;width:4px;height:700px;background:#c9d7ea;border-right:1px solid #9fb4d0"></div>
<svg class="a" style="left:508px;top:172px" width="15" height="16" viewBox="0 0 15 16"><rect x="0.5" y="0.5" width="13" height="15" fill="#fff" stroke="#6d7e9a"/><path d="M3 3.5h8M3 5.5h5M3 7.5h5M3 10.5h8M3 12.5h8" stroke="#5b79a8"/><rect x="8.5" y="5" width="2.5" height="3" fill="#9fb0c8"/></svg>
<div class="a" style="left:528px;top:172px;font-weight:bold;font-size:14px;line-height:18px;letter-spacing:0.5px;white-space:nowrap">SCENARIO 01 - SCENARIO 01</div>
<div class="a" style="left:507px;top:200px;font-weight:bold;font-size:16px;line-height:20px;letter-spacing:0.4px;white-space:nowrap">Edit Mode</div>
<div class="a" style="left:598px;top:199px;width:97px;height:19px;border:1px solid #92a9c8;border-radius:2px;background:linear-gradient(#eef3fa,#d9e3f1)"></div>
<div class="t" style="left:608px;top:202px;letter-spacing:-0.15px">Overview Mode</div>
<div class="t" style="left:1112px;top:202px;letter-spacing:-0.25px">Language</div>
<div class="combo" style="left:1165px;top:199px;width:40px;height:19px;border-color:#9cb3d3"><div class="t" style="left:3px;top:1px;color:#1c2d4a">En</div><div class="dd" style="width:15px;border-color:#9cb3d3"></div></div>
<div class="a" style="left:507px;top:228px;font-weight:bold;font-size:14px;line-height:18px;letter-spacing:0.25px;white-space:nowrap">Scenario Structure</div>
<!-- toolbar -->
<div class="a" style="left:503px;top:250px;width:702px;height:26px;background:linear-gradient(#eaf1fa,#dbe6f3);border-bottom:2px solid #9db4d2"></div>
<svg class="a" style="left:506px;top:254px" width="17" height="16" viewBox="0 0 17 16"><rect x="0.5" y="0.5" width="15.5" height="15" rx="2" fill="#3d9be9"/><rect x="3" y="1" width="11" height="6.5" fill="#cfe6f8"/><rect x="3.5" y="10" width="10" height="5.5" fill="#fff"/><rect x="5" y="11" width="1.5" height="3" fill="#3d9be9"/></svg>
<svg class="a" style="left:528px;top:254px" width="18" height="16" viewBox="0 0 18 16"><path d="M1.5 1.5h14v9h-8l-3 3v-3h-3z" fill="#f6f6f6" stroke="#8a8f98"/><path d="M5 6h1M8 6h1M11 6h1" stroke="#4c7ab8"/><circle cx="14" cy="12" r="3" fill="#3b92e0"/></svg>
<svg class="a" style="left:549px;top:260px" width="8" height="5"><path d="M1 1h6l-3 3z" fill="#333"/></svg>
<svg class="a" style="left:562px;top:253px" width="18" height="17" viewBox="0 0 18 17"><path d="M5.5 1.5h7l4 4v10.5h-11z" fill="#fafafa" stroke="#a5a9b0"/><rect x="1.5" y="7.5" width="9" height="6" fill="#eef6fc" stroke="#3a7fc2"/><path d="M3 9.5h5M3 11.5h5" stroke="#9bb"/></svg>
<svg class="a" style="left:583px;top:260px" width="8" height="5"><path d="M1 1h6l-3 3z" fill="#333"/></svg>
<svg class="a" style="left:598px;top:253px" width="17" height="17" viewBox="0 0 17 17"><circle cx="10.5" cy="6.5" r="5" fill="#fff" stroke="#3a5fd0" stroke-width="1.3"/><path d="M8 5.5h5M8 7.5h5" stroke="#3a5fd0"/><path d="M7 10l-5 5" stroke="#8a8f98" stroke-width="2"/></svg>
<svg class="a" style="left:620px;top:254px" width="16" height="16" viewBox="0 0 16 16"><path d="M1 1.5h13.5l-5.5 5.5h5.5l-6.5 7-7-6.5h5.5z" fill="#c4daf4" stroke="#111" stroke-width="1.1" stroke-linejoin="round"/></svg>
<svg class="a" style="left:643px;top:254px" width="16" height="16" viewBox="0 0 16 16"><path d="M1 14.5h13.5l-5.5-5.5h5.5l-6.5-7-7 6.5h5.5z" fill="#c4daf4" stroke="#111" stroke-width="1.1" stroke-linejoin="round"/></svg>
<svg class="a" style="left:1183px;top:253px" width="18" height="18" viewBox="0 0 18 18"><path d="M1 3a2 2 0 0 1 2-2h12a2 2 0 0 1 2 2v13h-16z" fill="#2f5ea6"/><path d="M1 14.5h16" stroke="#d9e4f2"/><text x="9" y="11" font-family="Liberation Sans" font-weight="bold" font-size="10" fill="#fff" text-anchor="middle">?</text></svg>
<!-- properties -->
<div class="a" style="left:503px;top:276px;width:702px;height:18px;background:#cfdcee;border-bottom:1px solid #9ab2d2"></div>
<div class="t" style="left:513px;top:278px">Properties</div>
<div class="t" style="left:513px;top:308px;letter-spacing:-0.36px">Technical Name</div>
<div class="a" style="left:598px;top:305px;width:595px;height:19px;border:1px solid #8b8b8b;border-radius:2px;background:#fff"></div>
<div class="t" style="left:603px;top:308px;color:#1c2d4a">QUERIES</div>
<div class="t" style="left:513px;top:332px;letter-spacing:-0.24px">Description</div>
<div class="a" style="left:598px;top:329px;width:595px;height:19px;border:1px solid #8b8b8b;border-radius:2px;background:#fff"></div>
<div class="t" style="left:603px;top:332px;color:#1c2d4a">Queries</div>
<div class="t" style="left:513px;top:353px">Added 30/07/2019 17:02:17 by Admin</div>
<div class="a" style="left:503px;top:404px;width:702px;height:2px;background:#93abcb"></div>
<!-- tree scrollbar -->
<div class="a" style="left:1186px;top:406px;width:18px;height:460px;background:#e3ecf8"></div>
<svg class="a" style="left:1189px;top:410px" width="12" height="8"><path d="M1 6h9l-4.5-5z" fill="#4b5570"/></svg>
<div class="a" style="left:1187px;top:645px;width:15px;height:204px;border:1px solid #9fb3cf;border-radius:2px;background:linear-gradient(90deg,#e9f0f8,#d7e2f0)"></div>
<svg class="a" style="left:1190px;top:742px" width="9" height="8"><path d="M1 1.5h7M1 3.5h7M1 5.5h7M1 7.5h7" stroke="#555"/></svg>
<svg class="a" style="left:1189px;top:853px" width="12" height="8"><path d="M1 1h9l-4.5 5z" fill="#4b5570"/></svg>
<div class="a" style="left:583px;top:586px;width:603px;height:20px;background:#316ac5"></div>

<svg class="a" style="left:529px;top:413px" width="9" height="6"><path d="M1 1l3.5 3.5 3.5-3.5" fill="none" stroke="#4a5468" stroke-width="1.6"/></svg>
<svg class="a" style="left:545px;top:410px" width="16" height="14" viewBox="0 0 16 14"><path d="M0.5 13V0.5H15.5" fill="none" stroke="#e4e6ea"/><rect x="1.5" y="0.5" width="13" height="11" fill="#fff" stroke="#3c3c3c"/><path d="M4.5 2v8" stroke="#2a2a2a"/></svg>
<div class="t" style="left:562.5px;top:410px;color:#000;letter-spacing:-0.264px">InfoObjects (INFOOBJECTS)</div>
<svg class="a" style="left:565px;top:430px" width="16" height="14" viewBox="0 0 16 14"><path d="M0.5 13V0.5H15.5" fill="none" stroke="#e4e6ea"/><rect x="1.5" y="0.5" width="13" height="11" fill="#fff" stroke="#3c3c3c"/><path d="M4.5 2v8" stroke="#2a2a2a"/></svg>
<div class="t" style="left:582.5px;top:430px;color:#000;letter-spacing:-0.316px">Characteristics (CHARACTERISTICS_IO)</div>
<svg class="a" style="left:781px;top:427px" width="15" height="15" viewBox="0 0 15 15"><g fill="#fff" stroke="#888"><rect x="4.5" y="0.5" width="3" height="3"/><rect x="7.5" y="0.5" width="3" height="3"/><rect x="10.5" y="0.5" width="3" height="3"/><rect x="7.5" y="3.5" width="3" height="3"/><rect x="10.5" y="3.5" width="3" height="3"/><rect x="10.5" y="6.5" width="3" height="3"/></g><path d="M6 3l5.5 10.5h-11z" fill="#22cc22" stroke="#000" stroke-linejoin="round"/></svg>
<svg class="a" style="left:565px;top:450px" width="16" height="14" viewBox="0 0 16 14"><path d="M0.5 13V0.5H15.5" fill="none" stroke="#e4e6ea"/><rect x="1.5" y="0.5" width="13" height="11" fill="#fff" stroke="#3c3c3c"/><path d="M4.5 2v8" stroke="#2a2a2a"/></svg>
<div class="t" style="left:582.5px;top:450px;color:#000;letter-spacing:-0.505px">Key Figures (KEYFIGURES)</div>
<svg class="a" style="left:714px;top:446px" width="15" height="15" viewBox="0 0 15 15"><path d="M5 1l4 9.5h-8.5z" fill="#fff" stroke="#777" stroke-dasharray="1 0.6"/><rect x="5.5" y="5.5" width="8.5" height="8.5" fill="#00d400" stroke="#000"/><g fill="#fff"><rect x="7" y="7" width="1" height="1"/><rect x="9.5" y="7" width="1" height="1"/><rect x="12" y="7" width="1" height="1"/><rect x="7" y="9.5" width="1" height="1"/><rect x="9.5" y="9.5" width="1" height="1"/><rect x="12" y="9.5" width="1" height="1"/><rect x="7" y="12" width="1" height="1"/><rect x="9.5" y="12" width="1" height="1"/><rect x="12" y="12" width="1" height="1"/></g></svg>
<svg class="a" style="left:545px;top:470px" width="16" height="14" viewBox="0 0 16 14"><path d="M0.5 13V0.5H15.5" fill="none" stroke="#e4e6ea"/><rect x="1.5" y="0.5" width="13" height="11" fill="#fff" stroke="#3c3c3c"/><path d="M4.5 2v8" stroke="#2a2a2a"/></svg>
<div class="t" style="left:562.5px;top:470px;color:#000;letter-spacing:-0.417px">DataSources (DATASOURCES)</div>
<svg class="a" style="left:713px;top:467px" width="15" height="15" viewBox="0 0 15 15"><path d="M0.5 3.5h5l2 2v4h-2.5v4.5h-2v-2h-2.5z" fill="#f0e020" stroke="#000"/><path d="M5 4l4-3.5 5 3-4 4.5z" fill="#fff" stroke="#000"/><path d="M7 4l3-2M8 5l3-2" stroke="#2040c0"/></svg>
<svg class="a" style="left:529px;top:493px" width="9" height="6"><path d="M1 1l3.5 3.5 3.5-3.5" fill="none" stroke="#4a5468" stroke-width="1.6"/></svg>
<svg class="a" style="left:545px;top:490px" width="16" height="14" viewBox="0 0 16 14"><path d="M0.5 13V0.5H15.5" fill="none" stroke="#e4e6ea"/><rect x="1.5" y="0.5" width="13" height="11" fill="#fff" stroke="#3c3c3c"/><path d="M4.5 2v8" stroke="#2a2a2a"/></svg>
<div class="t" style="left:562.5px;top:490px;color:#000;letter-spacing:-0.230px">Interfaces (INTERFACES)</div>
<svg class="a" style="left:565px;top:509px" width="15" height="14" viewBox="0 0 15 14"><rect x="0.5" y="0.5" width="14" height="12" fill="#fff" stroke="#3d5f82"/><path d="M2.3 7.3L4.5 3 6.7 7.3z" fill="none" stroke="#111" stroke-width="1.3" stroke-linejoin="round"/><path d="M8 2.5h5M8 4.5h5M8 6.5h5M2 8.5h11M2 10.5h11" stroke="#7a96c4"/></svg>
<div class="t" style="left:582.5px;top:510px;color:#000;letter-spacing:-0.378px">Extractors (EXTRACTORS)</div>
<svg class="a" style="left:565px;top:529px" width="15" height="14" viewBox="0 0 15 14"><rect x="0.5" y="0.5" width="14" height="12" fill="#fff" stroke="#3d5f82"/><path d="M2.3 7.3L4.5 3 6.7 7.3z" fill="none" stroke="#111" stroke-width="1.3" stroke-linejoin="round"/><path d="M8 2.5h5M8 4.5h5M8 6.5h5M2 8.5h11M2 10.5h11" stroke="#7a96c4"/></svg>
<div class="t" style="left:582.5px;top:530px;color:#000;letter-spacing:-0.299px">Flatfiles (FLATFILES)</div>
<svg class="a" style="left:565px;top:549px" width="15" height="14" viewBox="0 0 15 14"><rect x="0.5" y="0.5" width="14" height="12" fill="#fff" stroke="#3d5f82"/><path d="M2.3 7.3L4.5 3 6.7 7.3z" fill="none" stroke="#111" stroke-width="1.3" stroke-linejoin="round"/><path d="M8 2.5h5M8 4.5h5M8 6.5h5M2 8.5h11M2 10.5h11" stroke="#7a96c4"/></svg>
<div class="t" style="left:582.5px;top:550px;color:#000;letter-spacing:-0.278px">Other Interfaces (OTHER_INTERFACES)</div>
<svg class="a" style="left:529px;top:573px" width="9" height="6"><path d="M1 1l3.5 3.5 3.5-3.5" fill="none" stroke="#4a5468" stroke-width="1.6"/></svg>
<svg class="a" style="left:545px;top:570px" width="16" height="14" viewBox="0 0 16 14"><path d="M0.5 13V0.5H15.5" fill="none" stroke="#e4e6ea"/><rect x="1.5" y="0.5" width="13" height="11" fill="#fff" stroke="#3c3c3c"/><path d="M4.5 2v8" stroke="#2a2a2a"/></svg>
<div class="t" style="left:562.5px;top:570px;color:#000;letter-spacing:-0.357px">Reporting (REPORTING)</div>
<svg class="a" style="left:565px;top:590px" width="16" height="14" viewBox="0 0 16 14"><path d="M0.5 13V0.5H15.5" fill="none" stroke="#e4e6ea"/><rect x="1.5" y="0.5" width="13" height="11" fill="#fff" stroke="#3c3c3c"/><path d="M4.5 2v8" stroke="#2a2a2a"/></svg>
<div class="t" style="left:582.5px;top:590px;color:#fff;letter-spacing:-0.402px">Queries (QUERIES)</div>
<svg class="a" style="left:565px;top:610px" width="16" height="14" viewBox="0 0 16 14"><path d="M0.5 13V0.5H15.5" fill="none" stroke="#e4e6ea"/><rect x="1.5" y="0.5" width="13" height="11" fill="#fff" stroke="#3c3c3c"/><path d="M4.5 2v8" stroke="#2a2a2a"/></svg>
<div class="t" style="left:582.5px;top:610px;color:#000;letter-spacing:-0.334px">Definitions of Key Figures (KEYFIGURE_DEFINITIONS)</div>
<svg class="a" style="left:846px;top:606px" width="35" height="16" viewBox="0 0 35 16"><text x="0" y="8" font-family="Liberation Serif" font-style="italic" font-weight="bold" font-size="10" fill="#0a1a90">f</text><rect x="0.5" y="8.5" width="7" height="6" fill="#fff" stroke="#000"/><path d="M2.5 12.5l1.5-2 1.5 2" fill="none" stroke="#000"/><path d="M7.5 6.5l2.5-5 3 5" fill="none" stroke="#888" stroke-dasharray="1 0.7"/><rect x="7.5" y="6.5" width="7" height="7" fill="#00d400" stroke="#000"/><rect x="8.5" y="7.5" width="1" height="1" fill="#fff"/><rect x="8.5" y="10.0" width="1" height="1" fill="#fff"/><rect x="8.5" y="12.5" width="1" height="1" fill="#fff"/><rect x="11.0" y="7.5" width="1" height="1" fill="#fff"/><rect x="11.0" y="10.0" width="1" height="1" fill="#fff"/><rect x="11.0" y="12.5" width="1" height="1" fill="#fff"/><rect x="13.5" y="7.5" width="1" height="1" fill="#fff"/><rect x="13.5" y="10.0" width="1" height="1" fill="#fff"/><rect x="13.5" y="12.5" width="1" height="1" fill="#fff"/><path d="M24 6l2.5-5 3 5" fill="none" stroke="#888" stroke-dasharray="1 0.7"/><rect x="19.5" y="7.5" width="5" height="5" fill="#fff" stroke="#000"/><path d="M19 6.5h5" stroke="#f0e080"/><rect x="24.5" y="6.5" width="8" height="8" fill="#00d400" stroke="#000"/><rect x="25.5" y="7.5" width="1" height="1" fill="#fff"/><rect x="25.5" y="10.0" width="1" height="1" fill="#fff"/><rect x="25.5" y="12.5" width="1" height="1" fill="#fff"/><rect x="28.0" y="7.5" width="1" height="1" fill="#fff"/><rect x="28.0" y="10.0" width="1" height="1" fill="#fff"/><rect x="28.0" y="12.5" width="1" height="1" fill="#fff"/><rect x="30.5" y="7.5" width="1" height="1" fill="#fff"/><rect x="30.5" y="10.0" width="1" height="1" fill="#fff"/><rect x="30.5" y="12.5" width="1" height="1" fill="#fff"/></svg>
<svg class="a" style="left:565px;top:630px" width="16" height="14" viewBox="0 0 16 14"><path d="M0.5 13V0.5H15.5" fill="none" stroke="#e4e6ea"/><rect x="1.5" y="0.5" width="13" height="11" fill="#fff" stroke="#3c3c3c"/><path d="M4.5 2v8" stroke="#2a2a2a"/></svg>
<div class="t" style="left:582.5px;top:630px;color:#000;letter-spacing:-0.420px">Variables (VARIABLES)</div>
<svg class="a" style="left:695px;top:627px" width="14" height="14" viewBox="0 0 14 14"><rect x="0.5" y="0.5" width="13" height="13" fill="#f2ee00" stroke="#000"/><rect x="7" y="1" width="6" height="6" fill="#a8a020"/><rect x="1" y="7" width="6" height="6" fill="#1e5a1e"/><path d="M2 3.5h4M2 10h4M2 12h4" stroke="#fff"/><path d="M2 1.5l4 4M6 1.5l-4 4" stroke="#000"/><path d="M8 9a2 2 0 1 1 3 1.5v2" fill="none" stroke="#000" stroke-width="1.3"/></svg>
<svg class="a" style="left:525px;top:646px" width="18" height="19" viewBox="0 0 18 19"><rect x="3" y="2" width="12" height="4" fill="#ececec"/><path d="M2.5 2v4.5h13v-4.5" fill="none" stroke="#444" stroke-linejoin="round"/><path d="M2.5 18v-8.5h8.5l4.5 4.5v4" fill="#ececec" stroke="#555" stroke-linejoin="round"/></svg>
<div class="t" style="left:542.5px;top:650px;color:#000;letter-spacing:-0.795px">PAGE_BREAK3</div>
<svg class="a" style="left:509px;top:673px" width="9" height="6"><path d="M1 1l3.5 3.5 3.5-3.5" fill="none" stroke="#4a5468" stroke-width="1.6"/></svg>
<svg class="a" style="left:525px;top:670px" width="16" height="14" viewBox="0 0 16 14"><path d="M0.5 13V0.5H15.5" fill="none" stroke="#e4e6ea"/><rect x="1.5" y="0.5" width="13" height="11" fill="#fff" stroke="#3c3c3c"/><path d="M4.5 2v8" stroke="#2a2a2a"/></svg>
<div class="t" style="left:542.5px;top:670px;color:#000;letter-spacing:-0.234px">Operation (OPERATION)</div>
<svg class="a" style="left:545px;top:690px" width="16" height="14" viewBox="0 0 16 14"><path d="M0.5 13V0.5H15.5" fill="none" stroke="#e4e6ea"/><rect x="1.5" y="0.5" width="13" height="11" fill="#fff" stroke="#3c3c3c"/><path d="M4.5 2v8" stroke="#2a2a2a"/></svg>
<div class="t" style="left:562.5px;top:690px;color:#000;letter-spacing:-0.566px">Processchains (PROCESSCHAINS)</div>
<svg class="a" style="left:729px;top:689px" width="15" height="10" viewBox="0 0 15 10"><rect x="1" y="1" width="7" height="8" rx="3" fill="#dde6ee" stroke="#000" stroke-width="1.6"/><rect x="7" y="1" width="7" height="8" rx="3" fill="#dde6ee" stroke="#000" stroke-width="1.6"/><path d="M4 5h7" stroke="#fff" stroke-width="1.3"/></svg>
<svg class="a" style="left:529px;top:713px" width="9" height="6"><path d="M1 1l3.5 3.5 3.5-3.5" fill="none" stroke="#4a5468" stroke-width="1.6"/></svg>
<svg class="a" style="left:545px;top:710px" width="16" height="14" viewBox="0 0 16 14"><path d="M0.5 13V0.5H15.5" fill="none" stroke="#e4e6ea"/><rect x="1.5" y="0.5" width="13" height="11" fill="#fff" stroke="#3c3c3c"/><path d="M4.5 2v8" stroke="#2a2a2a"/></svg>
<div class="t" style="left:562.5px;top:710px;color:#000;letter-spacing:-0.223px">Authorizations (AUTHORIZATIONS)</div>
<svg class="a" style="left:565px;top:730px" width="16" height="14" viewBox="0 0 16 14"><path d="M0.5 13V0.5H15.5" fill="none" stroke="#e4e6ea"/><rect x="1.5" y="0.5" width="13" height="11" fill="#fff" stroke="#3c3c3c"/><path d="M4.5 2v8" stroke="#2a2a2a"/></svg>
<div class="t" style="left:582.5px;top:730px;color:#000;letter-spacing:-0.570px">Roles (ROLES)</div>
<svg class="a" style="left:655px;top:728px" width="14" height="14" viewBox="0 0 14 14"><path d="M7 7V1A6 6 0 0 0 1 7z" fill="#f0d000"/><path d="M7 7V1A6 6 0 0 1 13 7z" fill="#2d7fe0"/><path d="M7 7H1A6 6 0 0 0 7 13z" fill="#20b020"/><path d="M7 7H13A6 6 0 0 1 7 13z" fill="#d02020"/><circle cx="7" cy="7" r="6" fill="none" stroke="#111" stroke-width="1.2"/><path d="M7 1v12M1 7h12" stroke="#fff" stroke-width="0.8"/></svg>
<svg class="a" style="left:565px;top:750px" width="16" height="14" viewBox="0 0 16 14"><path d="M0.5 13V0.5H15.5" fill="none" stroke="#e4e6ea"/><rect x="1.5" y="0.5" width="13" height="11" fill="#fff" stroke="#3c3c3c"/><path d="M4.5 2v8" stroke="#2a2a2a"/></svg>
<div class="t" style="left:582.5px;top:750px;color:#000;letter-spacing:-0.287px">Analysis Authorizations (ANALYSIS_AUTHORIZATIONS)</div>
<svg class="a" style="left:851px;top:745px" width="17" height="17" viewBox="0 0 17 17"><circle cx="7" cy="5" r="2.6" fill="#e0b060" stroke="#8a3a10"/><circle cx="12" cy="4" r="2.6" fill="#e0b060" stroke="#8a3a10"/><path d="M4 8h11v1H4z" fill="#e89a40"/><circle cx="2.5" cy="12" r="2.2" fill="#4a90e0"/><path d="M4.5 16.5v-7.5h11.5" fill="none" stroke="#000" stroke-width="1.2"/><rect x="5.5" y="10" width="10" height="6" fill="#e4ecf6"/><rect x="9" y="12" width="6.5" height="3" fill="#f8f0a0"/><path d="M9 15.5h6.5" stroke="#e02020"/><path d="M9 11.5h6.5" stroke="#777"/></svg>
<svg class="a" style="left:525px;top:766px" width="18" height="19" viewBox="0 0 18 19"><rect x="3" y="2" width="12" height="4" fill="#ececec"/><path d="M2.5 2v4.5h13v-4.5" fill="none" stroke="#444" stroke-linejoin="round"/><path d="M2.5 18v-8.5h8.5l4.5 4.5v4" fill="#ececec" stroke="#555" stroke-linejoin="round"/></svg>
<div class="t" style="left:542.5px;top:770px;color:#000;letter-spacing:-0.804px">PAGE_BREAK4</div>
<svg class="a" style="left:509px;top:793px" width="9" height="6"><path d="M1 1l3.5 3.5 3.5-3.5" fill="none" stroke="#4a5468" stroke-width="1.6"/></svg>
<svg class="a" style="left:525px;top:790px" width="16" height="14" viewBox="0 0 16 14"><path d="M0.5 13V0.5H15.5" fill="none" stroke="#e4e6ea"/><rect x="1.5" y="0.5" width="13" height="11" fill="#fff" stroke="#3c3c3c"/><path d="M4.5 2v8" stroke="#2a2a2a"/></svg>
<div class="t" style="left:542.5px;top:790px;color:#000;letter-spacing:-0.433px">Miscellaneous (OTHER)</div>
<svg class="a" style="left:545px;top:809px" width="15" height="14" viewBox="0 0 15 14"><rect x="0.5" y="0.5" width="14" height="12" fill="#fff" stroke="#3d5f82"/><path d="M2.3 7.3L4.5 3 6.7 7.3z" fill="none" stroke="#111" stroke-width="1.3" stroke-linejoin="round"/><path d="M8 2.5h5M8 4.5h5M8 6.5h5M2 8.5h11M2 10.5h11" stroke="#7a96c4"/></svg>
<div class="t" style="left:562.5px;top:810px;color:#000;letter-spacing:-0.272px">Data security (SECURITY)</div>
<svg class="a" style="left:545px;top:829px" width="15" height="14" viewBox="0 0 15 14"><rect x="0.5" y="0.5" width="14" height="12" fill="#fff" stroke="#3d5f82"/><path d="M2.3 7.3L4.5 3 6.7 7.3z" fill="none" stroke="#111" stroke-width="1.3" stroke-linejoin="round"/><path d="M8 2.5h5M8 4.5h5M8 6.5h5M2 8.5h11M2 10.5h11" stroke="#7a96c4"/></svg>
<div class="t" style="left:562.5px;top:830px;color:#000;letter-spacing:-0.411px">Specific Customizing (SPECIFIC_CUSTOMIZING)</div>
<svg class="a" style="left:545px;top:850px" width="16" height="14" viewBox="0 0 16 14"><path d="M0.5 13V0.5H15.5" fill="none" stroke="#e4e6ea"/><rect x="1.5" y="0.5" width="13" height="11" fill="#fff" stroke="#3c3c3c"/><path d="M4.5 2v8" stroke="#2a2a2a"/></svg>
<div class="t" style="left:562.5px;top:850px;color:#000;letter-spacing:-0.450px">Custom Tables (CUSTOM_TABLES)</div>
<svg class="a" style="left:733px;top:848px" width="12" height="12" viewBox="0 0 12 12"><rect x="0.75" y="0.75" width="10.5" height="10.5" fill="#fff" stroke="#000" stroke-width="1.5"/><path d="M1.5 3.5h9" stroke="#7aa2e0"/><path d="M3.5 1.5v9M7.5 1.5v9" stroke="#7aa2e0"/><path d="M2 5.5h1M2 7.5h1M2 9.5h1M5 5.5h2M5 7.5h2M5 9.5h2M9 5.5h1M9 7.5h1M9 9.5h1" stroke="#999"/></svg>
<!-- status bar -->

<div class="a" style="left:8px;top:872px;width:1203px;height:31px;background:#d4e0f0;border:1px solid #7a8598"></div>
<svg class="a" style="left:14px;top:876px" width="16" height="19" viewBox="0 0 16 19"><path d="M3.5 2.5l3-2h8v15l-3 3h-8z" fill="#e3e3e3" stroke="#8c8c8c"/><path d="M3.5 2.5h8v15.5M11.5 2.5l3-2" fill="none" stroke="#8c8c8c"/><path d="M5 6.5h5M5 9.5h5M5 12.5h5M5 14.5h5" stroke="#777"/></svg>
<div class="a" style="left:39px;top:876px;width:107px;height:23px;border:1px solid #a9bdd8;border-radius:3px;background:linear-gradient(#e5edf7,#d5e1f0)"></div>
<div class="t" style="left:58px;top:881px;color:#1e2a44">Select system</div>
<div class="t" style="left:152px;top:881px;font-weight:bold;color:#1e2a44">BI2</div>
<div class="t" style="left:177px;top:881px;color:#1e2a44;letter-spacing:-0.3px">(BW)</div>
<svg class="a" style="left:208px;top:877px" width="19" height="19" viewBox="0 0 19 19"><path d="M1 18l5-5M13 6l5-5" stroke="#555" stroke-width="1.5"/><path d="M5 10l4-4 4 4-4 4z" fill="#4aa0e8" stroke="#2a3f60"/><path d="M8 7l3-3 4 4-3 3z" fill="#a8d4f8" stroke="#2a3f60"/></svg>
<div class="a" style="left:235px;top:876px;width:74px;height:23px;border:1px solid #a9bdd8;border-radius:3px;background:linear-gradient(#e5edf7,#d5e1f0)"></div>
<div class="t" style="left:244px;top:881px;color:#1e2a44">Disconnect</div>
<svg class="a" style="left:1007px;top:876px" width="17" height="17" viewBox="0 0 17 17"><ellipse cx="7" cy="3" rx="6" ry="2.5" fill="#e5e5e5" stroke="#999"/><path d="M1 3v10c0 1.5 2.7 2.5 6 2.5s6-1 6-2.5v-10" fill="#d8d8d8" stroke="#999"/><rect x="7" y="8" width="9" height="9" fill="#2d8fe0"/><rect x="9" y="8.5" width="5" height="3" fill="#fff"/><rect x="9.5" y="13" width="4" height="3.5" fill="#fff"/></svg>
<div class="t" style="left:1026px;top:879px;color:#1e2a44;letter-spacing:-0.5px">SQLite</div>
<svg class="a" style="left:1066px;top:876px" width="15" height="17" viewBox="0 0 15 17"><circle cx="7.5" cy="5" r="3.6" fill="#f5c9a0" stroke="#8a5a2a" stroke-width="0.8"/><path d="M4 4c0-3 7-3 7 0-1-1-5-1-7 0z" fill="#6a3a1a"/><path d="M1 16.5c0-4 2.5-6 6.5-6s6.5 2 6.5 6z" fill="#d6dff0" stroke="#4a5a90"/></svg>
<div class="t" style="left:1084px;top:879px;color:#1e2a44;letter-spacing:-0.18px">Admin (Full administrator)</div>

<svg class="a" style="left:666px;top:16px" width="16" height="22" viewBox="0 0 16 22"><path d="M1.5 1.5v16l4-4 3.3 6.3 2.2-1.1-3.2-6.2h5.7z" fill="#fff" stroke="#000" stroke-linejoin="round"/></svg>
</body></html>
